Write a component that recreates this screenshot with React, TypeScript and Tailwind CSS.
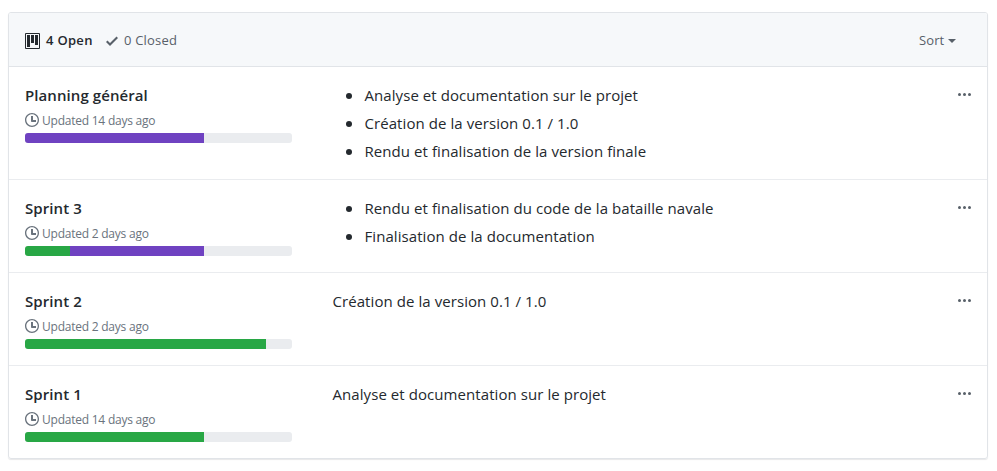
import React from "react";

type Project = {
  title: string;
  updated: string;
  done: number;
  doing: number;
  body: string[];
  list: boolean;
  height: string;
};

const projects: Project[] = [
  {
    title: "Planning général",
    updated: "Updated 14 days ago",
    done: 0,
    doing: 179,
    list: true,
    body: [
      "Analyse et documentation sur le projet",
      "Création de la version 0.1 / 1.0",
      "Rendu et finalisation de la version finale",
    ],
    height: "h-[113px] border-b",
  },
  {
    title: "Sprint 3",
    updated: "Updated 2 days ago",
    done: 45,
    doing: 134,
    list: true,
    body: ["Rendu et finalisation du code de la bataille navale", "Finalisation de la documentation"],
    height: "h-[93px] border-b",
  },
  {
    title: "Sprint 2",
    updated: "Updated 2 days ago",
    done: 241,
    doing: 0,
    list: false,
    body: ["Création de la version 0.1 / 1.0"],
    height: "h-[93px] border-b",
  },
  {
    title: "Sprint 1",
    updated: "Updated 14 days ago",
    done: 179,
    doing: 0,
    list: false,
    body: ["Analyse et documentation sur le projet"],
    height: "h-[92px]",
  },
];

function ProjectIcon() {
  return (
    <svg width="15" height="16" viewBox="0 0 15 16" fill="currentColor" className="shrink-0">
      <path
        fillRule="evenodd"
        d="M10 12h3V2h-3v10zm-4-2h3V2H6v8zm-4 4h3V2H2v12zm-1 1h13V1H1v14zM14 0H1a1 1 0 0 0-1 1v14a1 1 0 0 0 1 1h13a1 1 0 0 0 1-1V1a1 1 0 0 0-1-1z"
      />
    </svg>
  );
}

function CheckIcon() {
  return (
    <svg width="12" height="16" viewBox="0 0 12 16" fill="currentColor" className="shrink-0">
      <path fillRule="evenodd" d="M12 5l-8 8-4-4 1.5-1.5L4 10l6.5-6.5L12 5z" />
    </svg>
  );
}

function ClockIcon() {
  return (
    <svg width="14" height="16" viewBox="0 0 14 16" fill="currentColor" className="shrink-0">
      <path
        fillRule="evenodd"
        d="M8 8h3v2H7c-.55 0-1-.45-1-1V4h2v4zM7 2.3c3.14 0 5.7 2.56 5.7 5.7s-2.56 5.7-5.7 5.7A5.71 5.71 0 0 1 1.3 8c0-3.14 2.56-5.7 5.7-5.7zM7 1C3.14 1 0 4.14 0 8s3.14 7 7 7 7-3.14 7-7-3.14-7-7-7z"
      />
    </svg>
  );
}

function KebabIcon() {
  return (
    <svg width="13" height="16" viewBox="0 0 13 16" fill="currentColor" className="shrink-0">
      <path
        fillRule="evenodd"
        d="M1.5 9a1.5 1.5 0 1 0 0-3 1.5 1.5 0 0 0 0 3zm5 0a1.5 1.5 0 1 0 0-3 1.5 1.5 0 0 0 0 3zM13 7.5a1.5 1.5 0 1 1-3 0 1.5 1.5 0 0 1 3 0z"
      />
    </svg>
  );
}

function ProjectRow({ project }: { project: Project }) {
  return (
    <div className={`flex border-[#eaecef] pl-4 pr-4 ${project.height}`}>
      <div className="w-[267px] shrink-0 pt-4">
        <h4 className="h-[29px] text-[15px] leading-6 font-[550] tracking-[0.08px] whitespace-nowrap">
          {project.title}
        </h4>
        <div className="flex h-[21px] items-start text-[#6a737d]">
          <ClockIcon />
          <span className="ml-[3px] text-[12px] leading-[18px] tracking-[-0.23px] whitespace-nowrap">
            {project.updated}
          </span>
        </div>
        <div className="flex h-[10px] overflow-hidden rounded-[3px] bg-[#eaecef]">
          <span className="bg-[#28a745]" style={{ width: project.done }} />
          <span className="bg-[#6f42c1]" style={{ width: project.doing }} />
        </div>
      </div>
      <div className="ml-[40.5px] flex-1 pt-4 text-[15px] leading-6 tracking-[0.07px]">
        {project.list ? (
          <ul className="flex flex-col gap-1">
            {project.body.map((line) => (
              <li key={line} className="flex items-center whitespace-nowrap">
                <span className="mt-0.5 mr-[12.5px] ml-[13.5px] size-[6px] rounded-full bg-[#24292e]" />
                {line}
              </li>
            ))}
          </ul>
        ) : (
          <p className="whitespace-nowrap">{project.body[0]}</p>
        )}
      </div>
      <div className="pt-5 text-[#586069]">
        <KebabIcon />
      </div>
    </div>
  );
}

export default function App() {
  return (
    <div className="h-[471px] overflow-hidden bg-white pt-3 pl-2 font-['Open_Sans',sans-serif] text-[#24292e]">
      <div className="w-[980px] overflow-hidden rounded-[3px] border border-[#e1e4e8] shadow-[0_1px_1px_rgba(27,31,35,0.1)]">
        <div className="flex h-[54px] items-start border-b border-[#e1e4e8] bg-[#f6f8fa] px-4 pt-5 text-[13px] leading-[14px] text-[#586069]">
          <span className="flex items-start text-[#24292e]">
            <ProjectIcon />
            <span className="ml-[6px] w-[47px] font-[550] tracking-[0.3px] whitespace-nowrap">4 Open</span>
          </span>
          <span className="ml-[13px] flex items-start">
            <CheckIcon />
            <span className="ml-[6px] tracking-[0.2px] whitespace-nowrap">0 Closed</span>
          </span>
          <span className="mr-[15px] ml-auto flex items-start">
            <span className="w-[26px] tracking-[0.1px] whitespace-nowrap">Sort</span>
            <span className="mt-[6px] ml-[3px] border-x-4 border-t-4 border-x-transparent border-t-[#586069]" />
          </span>
        </div>
        {projects.map((project) => (
          <ProjectRow key={project.title} project={project} />
        ))}
      </div>
    </div>
  );
}
